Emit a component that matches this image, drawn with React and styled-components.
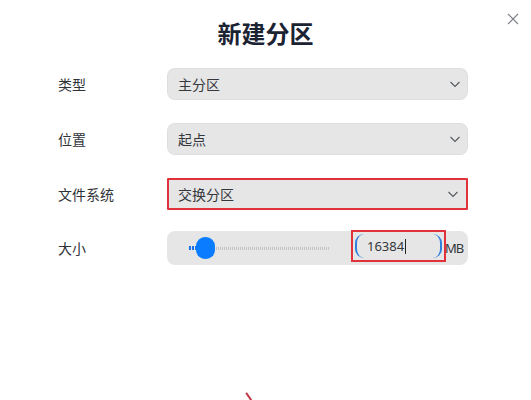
import React from "react";
import styled, { createGlobalStyle } from "styled-components";

const GlobalStyle = createGlobalStyle`
  html, body {
    margin: 0;
    padding: 0;
    background: #ffffff;
  }
  body {
    font-family: "Noto Sans", "Noto Sans CJK SC", sans-serif;
  }
`;

const Dialog = styled.div`
  position: relative;
  width: 531px;
  height: 400px;
  overflow: hidden;
  background: #fff;
  box-sizing: border-box;
  padding-top: 16px;
`;

const Title = styled.h1`
  margin: 0;
  text-align: center;
  font-size: 24px;
  line-height: 36px;
  font-weight: 700;
  color: #1b2333;
`;

const CloseButton = styled.button`
  position: absolute;
  top: 11px;
  right: 10px;
  width: 16px;
  height: 16px;
  padding: 0;
  border: none;
  background: none;
  display: flex;
  align-items: center;
  justify-content: center;
`;

const Form = styled.div`
  display: flex;
  flex-direction: column;
  gap: 23px;
  padding: 16px 63px 0 58px;
`;

const Row = styled.div`
  display: grid;
  grid-template-columns: 109px 1fr;
  align-items: center;
  margin-top: ${(p) => (p.$tight ? "-2px" : "0")};
`;

const Label = styled.span`
  font-size: 14px;
  color: #2f3338;
`;

const Select = styled.div`
  height: 32px;
  box-sizing: border-box;
  background: #e6e6e6;
  display: flex;
  align-items: center;
  justify-content: space-between;
  padding: 0 6px 0 ${(p) => (p.$marked ? "9px" : "11px")};
  font-size: 14px;
  color: #34383d;
  border: ${(p) => (p.$marked ? "2px solid #e0323a" : "none")};
  border-radius: ${(p) => (p.$marked ? "1px" : "8px")};
  box-shadow: ${(p) => (p.$marked ? "none" : "inset 0 0 0 1px rgba(0, 0, 0, 0.03)")};
`;

const SizeBox = styled.div`
  height: 34px;
  box-sizing: border-box;
  border-radius: 8px;
  background: #e6e6e6;
  display: flex;
  align-items: center;
  padding: 0 0 0 22px;
  font-size: 14px;
  color: #34383d;
`;

const Slider = styled.div`
  position: relative;
  width: 141px;
  height: 24px;
  display: flex;
  align-items: center;
`;

const TrackDone = styled.div`
  width: 9px;
  height: 4px;
  margin-right: 10px;
  background: repeating-linear-gradient(
    90deg,
    #1a73e8 0 2px,
    transparent 2px 3px
  );
`;

const TrackRest = styled.div`
  flex: 1;
  height: 3px;
  background: repeating-linear-gradient(
    90deg,
    #c4c4c4 0 1px,
    transparent 1px 2px
  );
`;

const Knob = styled.div`
  position: absolute;
  left: 7px;
  top: 1px;
  width: 19px;
  height: 22px;
  border-radius: 9px;
  background: #0a7cff;
`;

const InputWrap = styled.div`
  align-self: flex-start;
  margin: 1px 0 0 23px;
  padding: 2px;
  outline: 2px solid #e0323a;
  display: flex;
`;

const NumberInput = styled.div`
  width: 87px;
  height: 24px;
  box-sizing: border-box;
  border-radius: 9px;
  border-left: 2px solid #2f7fdc;
  border-right: 2px solid #2f7fdc;
  display: flex;
  align-items: center;
  padding-left: 10px;
  font-size: 13px;
  color: #34383d;
`;

const Caret = styled.span`
  display: inline-block;
  width: 1px;
  height: 15px;
  background: #222;
  margin-left: 1px;
`;

const Unit = styled.span`
  margin-left: 1px;
  font-size: 13px;
  color: #34383d;
  letter-spacing: -1px;
`;

const Mark = styled.div`
  position: absolute;
  left: 248px;
  top: 392px;
  width: 2px;
  height: 10px;
  background: #c0394a;
  transform: rotate(-35deg);
`;

const Chevron = () => (
  <svg width="14" height="14" viewBox="0 0 14 14" fill="none">
    <path d="M2.5 5 L7 9.5 L11.5 5" stroke="#55595f" strokeWidth="1.1" />
  </svg>
);

const rows = [
  { label: "类型", value: "主分区" },
  { label: "位置", value: "起点" },
  { label: "文件系统", value: "交换分区", marked: true },
];

export default function App() {
  return (
    <Dialog>
      <GlobalStyle />
      <CloseButton aria-label="关闭">
        <svg width="12" height="12" viewBox="0 0 12 12">
          <path d="M1 1 L11 11 M11 1 L1 11" stroke="#7d8087" strokeWidth="1.1" />
        </svg>
      </CloseButton>
      <Title>新建分区</Title>
      <Form>
        {rows.map((r) => (
          <Row key={r.label}>
            <Label>{r.label}</Label>
            <Select $marked={r.marked}>
              {r.value}
              <Chevron />
            </Select>
          </Row>
        ))}
        <Row $tight>
          <Label>大小</Label>
          <SizeBox>
            <Slider>
              <TrackDone />
              <TrackRest />
              <Knob />
            </Slider>
            <InputWrap>
              <NumberInput>
                16384
                <Caret />
              </NumberInput>
            </InputWrap>
            <Unit>MB</Unit>
          </SizeBox>
        </Row>
      </Form>
      <Mark />
    </Dialog>
  );
}
